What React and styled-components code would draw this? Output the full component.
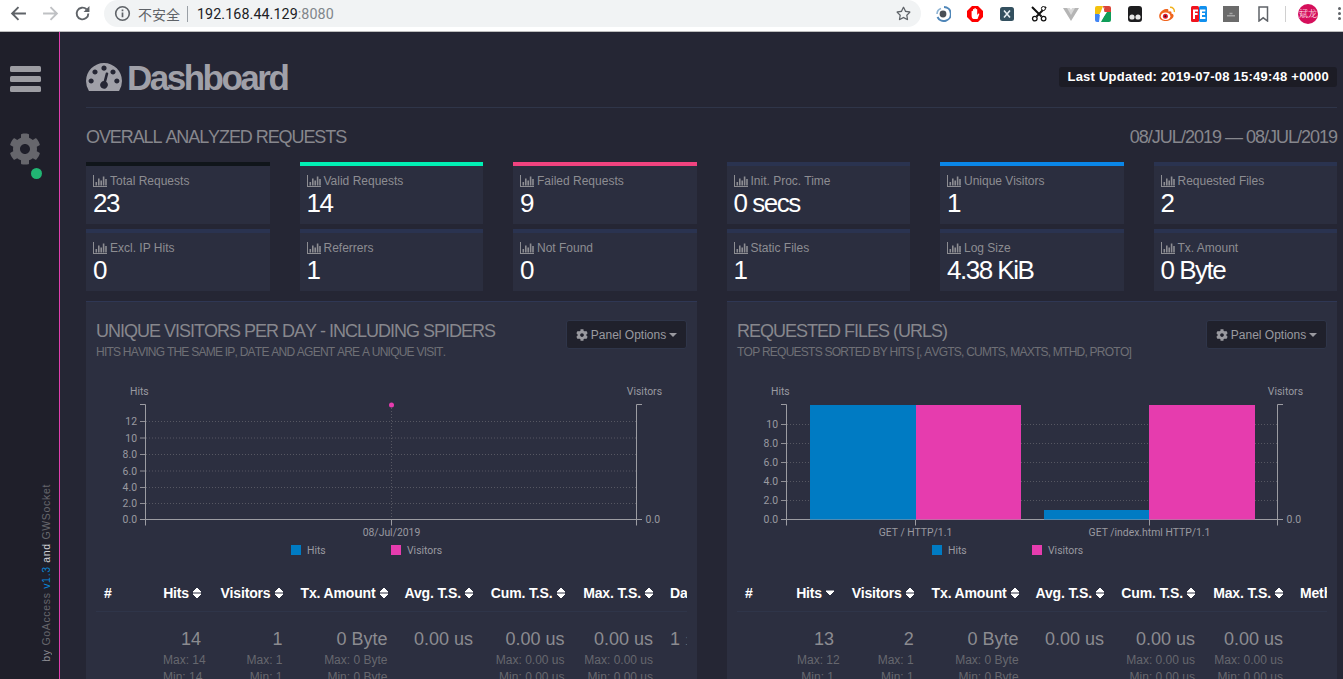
import React from "react";
import styled, { createGlobalStyle } from "styled-components";
import { FaCog, FaRegStar } from "react-icons/fa";

const Global = createGlobalStyle`
  html, body { margin: 0; padding: 0; height: 679px; overflow: hidden; background: #252634; }
  * { box-sizing: border-box; }
  body { font-family: "Liberation Sans", Arial, sans-serif; }
`;

const Page = styled.div`
  width: 1343px;
  height: 679px;
  display: flex;
  flex-direction: column;
  overflow: hidden;
`;

/* ---------- browser chrome ---------- */
const Chrome = styled.div`
  height: 32px;
  flex: none;
  background: #fff;
  border-bottom: 1px solid #bdbdbd;
  display: flex;
  align-items: flex-start;
`;
const NavGroup = styled.div`
  width: 104px;
  height: 27px;
  flex: none;
  display: flex;
  align-items: center;
  padding-left: 10px;
  gap: 15px;
`;
const NavIcon = styled.svg`
  width: 17px;
  height: 17px;
  flex: none;
  display: block;
`;
const Omnibox = styled.div`
  width: 817px;
  height: 27px;
  flex: none;
  background: #f1f3f4;
  border-radius: 0 14px 14px 14px;
  border-top-left-radius: 14px;
  display: flex;
  align-items: center;
  padding: 0 10px 0 10px;
`;
const Insecure = styled.span`
  font-family: "Noto Sans CJK SC", "Liberation Sans", sans-serif;
  font-size: 14px;
  color: #5f6368;
  margin-left: 7px;
  padding-right: 7px;
  line-height: 16px;
  border-right: 1px solid #9aa0a6;
`;
const Host = styled.span`
  font-family: "Roboto", "Liberation Sans", sans-serif;
  font-size: 14.3px;
  color: #202124;
  margin-left: 9px;
  letter-spacing: 0.08px;
`;
const Port = styled.span`
  color: #80868b;
`;
const StarSlot = styled.span`
  margin-left: auto;
  color: #5f6368;
  display: flex;
  font-size: 15px;
`;
const Extensions = styled.div`
  flex: 1;
  height: 27px;
  display: flex;
  align-items: center;
  padding-left: 14px;
  gap: 16px;
`;
const Ext = styled.svg`
  width: 16px;
  height: 16px;
  flex: none;
  display: block;
`;
const ToolDivider = styled.span`
  width: 1px;
  height: 16px;
  background: #d0d0d0;
  margin-left: -2px;
  flex: none;
`;
const Avatar = styled.span`
  width: 20px;
  height: 20px;
  flex: none;
  margin-left: -4px;
  border-radius: 50%;
  background: #d50f5b;
  color: #f6c6d8;
  font-family: "Noto Sans CJK SC", sans-serif;
  font-size: 9px;
  line-height: 20px;
  text-align: center;
  white-space: nowrap;
  overflow: hidden;
`;
const MoreDots = styled.span`
  display: flex;
  flex-direction: column;
  gap: 2px;
  margin-left: 4px;
  flex: none;
  & > i {
    width: 3px;
    height: 3px;
    background: #5f6368;
    border-radius: 50%;
    display: block;
  }
`;

/* ---------- app ---------- */
const Body = styled.div`
  flex: 1;
  display: flex;
  min-height: 0;
`;
const Sidebar = styled.aside`
  width: 60px;
  flex: none;
  background: #1f1f2a;
  border-right: 1px solid #e03fae;
  display: flex;
  flex-direction: column;
  align-items: center;
  padding-top: 34px;
  padding-bottom: 17px;
`;
const Burger = styled.div`
  width: 31px;
  display: flex;
  flex-direction: column;
  gap: 4px;
  margin-right: 9px;
  & > i {
    display: block;
    height: 6px;
    background: #9c9ca2;
    border-radius: 1.5px;
  }
`;
const GearWrap = styled.div`
  position: relative;
  margin-top: 41px;
  margin-right: 9px;
  width: 32px;
  height: 32px;
  color: #66666c;
  font-size: 32px;
  display: flex;
`;
const StatusDot = styled.span`
  position: absolute;
  right: -1px;
  bottom: -14px;
  width: 11px;
  height: 11px;
  border-radius: 50%;
  background: #21b573;
`;
const Credit = styled.div`
  margin-top: auto;
  writing-mode: vertical-rl;
  transform: rotate(180deg);
  font-size: 10.5px;
  letter-spacing: 0.67px;
  color: #8a8a90;
  align-self: flex-end;
  margin-right: 7px;
  white-space: nowrap;
`;
const CreditLink = styled.span`
  color: ${(p) => p.$c};
`;
const Main = styled.main`
  flex: 1;
  min-width: 0;
  padding: 0 6px 0 26px;
  background: #252634;
  overflow: hidden;
`;
const PageHead = styled.header`
  height: 76px;
  border-bottom: 1px solid #2f3549;
  display: flex;
  align-items: flex-start;
  justify-content: space-between;
`;
const H1 = styled.h1`
  margin: 28px 0 0;
  display: flex;
  align-items: flex-start;
  gap: 5px;
  font-size: 35px;
  line-height: 36px;
  font-weight: 700;
  letter-spacing: -2.5px;
  color: #a0a0a8;
`;
const Gauge = styled.svg`
  width: 36px;
  height: 28.3px;
  margin-top: 3px;
  display: block;
  fill: #a0a0a8;
  flex: none;
`;
const Updated = styled.div`
  margin: 35px 0 0 0;
  padding: 0 8px;
  height: 20px;
  line-height: 20px;
  border-radius: 3px;
  background: #1c1c25;
  color: #fff;
  font-size: 13px;
  font-weight: 700;
  letter-spacing: 0.23px;
  white-space: nowrap;
`;
const SectionHead = styled.div`
  height: 54px;
  display: flex;
  justify-content: space-between;
  align-items: flex-start;
  padding-top: 19px;
  font-size: 18px;
  line-height: 20px;
  letter-spacing: -1px;
  font-kerning: none;
  color: #87878d;
`;
const SectionTitle = styled.span`
  letter-spacing: -1.08px;
`;
const CardGrid = styled.div`
  display: grid;
  grid-template-columns: repeat(6, 1fr);
  column-gap: 30px;
  row-gap: 5px;
`;
const Card = styled.div`
  height: 62px;
  background: #2b2e3f;
  border-top: 4px solid ${(p) => p.$accent || "#2a3350"};
  padding: 8px 7px 0;
  overflow: hidden;
`;
const CardLabel = styled.div`
  display: flex;
  align-items: center;
  gap: 3px;
  font-size: 12px;
  line-height: 14px;
  color: #8d8d92;
  white-space: nowrap;
`;
const BarIcon = styled.svg`
  width: 14px;
  height: 12px;
  flex: none;
  display: block;
  fill: #8d8d92;
`;
const CardValue = styled.div`
  margin: 1px 0 0 0;
  font-size: 26px;
  line-height: 28px;
  letter-spacing: -1.5px;
  color: #fff;
  white-space: nowrap;
`;
const Panels = styled.div`
  margin-top: 10px;
  display: grid;
  grid-template-columns: 611px 610px;
  column-gap: 30px;
`;
const Panel = styled.section`
  background: #2c2f40;
  border-top: 1px solid #2f3754;
  height: 400px;
  padding: 0 10px;
  overflow: hidden;
`;
const PanelHead = styled.div`
  display: flex;
  justify-content: space-between;
  align-items: flex-start;
  padding-top: 19px;
  height: 78px;
`;
const PanelTitle = styled.h3`
  margin: 0;
  font-size: 18px;
  line-height: 20px;
  font-weight: 400;
  letter-spacing: -1px;
  font-kerning: none;
  color: #87878d;
`;
const PanelSub = styled.p`
  margin: 4px 0 0;
  font-size: 12px;
  line-height: 14px;
  letter-spacing: -0.76px;
  font-kerning: none;
  color: #6f7076;
  white-space: nowrap;
`;
const OptionsBtn = styled.button`
  margin-top: -1px;
  height: 29px;
  width: 121px;
  flex: none;
  padding: 0;
  display: flex;
  align-items: center;
  justify-content: center;
  gap: 3px;
  background: #20212c;
  border: 1px solid #2f3549;
  border-radius: 3px;
  color: #9a9aa0;
  font-family: inherit;
  font-size: 12px;
`;
const Caret = styled.span`
  width: 0;
  height: 0;
  border-left: 4.5px solid transparent;
  border-right: 4.5px solid transparent;
  border-top: 4.5px solid #9a9aa0;
`;
const ChartSvg = styled.svg`
  display: block;
  margin: 0 -10px;
  width: calc(100% + 20px);
  height: 193px;
  font-family: "Roboto", "Liberation Sans", sans-serif;
  font-size: 10.4px;
  fill: #9a9aa0;
`;
const TableWrap = styled.div`
  overflow: hidden;
`;
const Row = styled.div`
  display: grid;
  grid-template-columns: ${(p) => p.$cols};
`;
const HeadRow = styled(Row)`
  height: 39px;
  border-bottom: 1px solid #2f3549;
  align-items: start;
  padding-top: 12px;
`;
const Th = styled.div`
  padding: 0 8px;
  display: flex;
  align-items: center;
  justify-content: ${(p) => (p.$left ? "flex-start" : "flex-end")};
  gap: 3px;
  height: 15px;
  font-size: 14px;
  font-weight: 700;
  letter-spacing: -0.15px;
  color: #fff;
  white-space: nowrap;
  overflow: ${(p) => (p.$left ? "hidden" : "visible")};
`;
const SortIcon = styled.svg`
  width: 10px;
  height: 12px;
  flex: none;
  display: block;
  fill: #fff;
  stroke: #fff;
  stroke-width: 1;
  stroke-linejoin: round;
`;
const DataRow = styled(Row)`
  padding-top: 17px;
`;
const Td = styled.div`
  padding: 0 9px 0 8px;
  text-align: right;
  white-space: nowrap;
  overflow: hidden;
`;
const CellMain = styled.div`
  font-size: 18px;
  line-height: 20px;
  color: #8b8b90;
`;
const CellMeta = styled.div`
  margin-top: 5px;
  font-size: 12px;
  line-height: 12px;
  color: #66676e;
`;
const DateCell = styled.div`
  font-size: 18px;
  line-height: 20px;
  color: #8b8b90;
  text-align: left;
  & > small {
    font-size: 12px;
    color: #66676e;
  }
`;

/* ---------- icons ---------- */
const GAUGE =
  "M384 1152q0-53-37.5-90.5t-90.5-37.5-90.5 37.5-37.5 90.5 37.5 90.5 90.5 37.5 90.5-37.5 37.5-90.5zm192-448q0-53-37.5-90.5t-90.5-37.5-90.5 37.5-37.5 90.5 37.5 90.5 90.5 37.5 90.5-37.5 37.5-90.5zm428 481l101-382q6-26-7.5-48.5t-38.5-29.5-48 6.5-30 39.5l-101 382q-60 5-107 43.5t-63 98.5q-20 77 20 146t117 89 146-20 89-117q16-60-6-117t-72-91zm660-33q0-53-37.5-90.5t-90.5-37.5-90.5 37.5-37.5 90.5 37.5 90.5 90.5 37.5 90.5-37.5 37.5-90.5zm-640-640q0-53-37.5-90.5t-90.5-37.5-90.5 37.5-37.5 90.5 37.5 90.5 90.5 37.5 90.5-37.5 37.5-90.5zm448 192q0-53-37.5-90.5t-90.5-37.5-90.5 37.5-37.5 90.5 37.5 90.5 90.5 37.5 90.5-37.5 37.5-90.5zm320 448q0 261-141 483-19 29-54 29h-1402q-35 0-54-29-141-221-141-483 0-182 71-348t191-286 286-191 348-71 348 71 286 191 191 286 71 348z";

const Bars = () => (
  <BarIcon viewBox="0 0 14 12">
    <path d="M0 0h1v11h13v1H0z" />
    <path d="M2.5 7h1.6v3.4H2.5zM5 3.5h1.6v6.9H5zM7.4 5.5H9v4.9H7.4zM9.8 1.5h1.6v8.9H9.8zM12.2 4h1.6v6.4h-1.6z" />
  </BarIcon>
);

const Sort = ({ desc }) => (
  <SortIcon viewBox="0 0 10 12">
    {desc ? (
      <path d="M1 4h8L5 8z" />
    ) : (
      <>
        <path d="M5 1L9 5H1z" />
        <path d="M1 7h8l-4 4z" />
      </>
    )}
  </SortIcon>
);

function LeftChart() {
  const ticks = [["12", 421], ["10", 437.5], ["8.0", 454], ["6.0", 470.5], ["4.0", 487], ["2.0", 503]];
  return (
    <ChartSvg viewBox="86 380 611 193">
      {ticks.map(([l, y]) => (
        <g key={l}>
          <line x1="146" x2="636" y1={y + 0.5} y2={y + 0.5} stroke="#565762" strokeDasharray="1 2" />
          <line x1="140" x2="146" y1={y + 0.5} y2={y + 0.5} stroke="#8f8f95" />
          <text x="137" y={y + 4} textAnchor="end">{l}</text>
        </g>
      ))}
      <line x1="391.5" x2="391.5" y1="405" y2="519" stroke="#565762" strokeDasharray="1 2" />
      <path d="M140 404.5h5.5V525.5M140 519.5H637M391.5 519.5v6" fill="none" stroke="#9c9ca2" />
      <path d="M642 404.5h-5.5V525.5M636.5 519.5H642" fill="none" stroke="#9c9ca2" />
      <text x="137" y="519" dy="4" textAnchor="end">0.0</text>
      <text x="660" y="523" textAnchor="end">0.0</text>
      <text x="130" y="395">Hits</text>
      <text x="662" y="395" textAnchor="end">Visitors</text>
      <circle cx="391.5" cy="405" r="2.5" fill="#e63cae" />
      <text x="391.5" y="536" textAnchor="middle">08/Jul/2019</text>
      <rect x="291" y="545" width="10" height="10" fill="#007bc3" />
      <text x="307" y="554">Hits</text>
      <rect x="391" y="545" width="10" height="10" fill="#e63cae" />
      <text x="407" y="554">Visitors</text>
    </ChartSvg>
  );
}

function RightChart() {
  const ticks = [["10", 424], ["8.0", 443], ["6.0", 462], ["4.0", 481], ["2.0", 500]];
  return (
    <ChartSvg viewBox="727 380 610 193">
      {ticks.map(([l, y]) => (
        <g key={l}>
          <line x1="787" x2="1277" y1={y + 0.5} y2={y + 0.5} stroke="#565762" strokeDasharray="1 2" />
          <line x1="781" x2="787" y1={y + 0.5} y2={y + 0.5} stroke="#8f8f95" />
          <text x="778" y={y + 4} textAnchor="end">{l}</text>
        </g>
      ))}
      <path d="M781 404.5h5.5V525.5M781 519.5H1278M915.5 519.5v6M1149.5 519.5v6" fill="none" stroke="#9c9ca2" />
      <path d="M1283 404.5h-5.5V525.5M1277.5 519.5H1283" fill="none" stroke="#9c9ca2" />
      <rect x="810" y="405" width="106" height="114.5" fill="#007bc3" />
      <rect x="916" y="405" width="105" height="114.5" fill="#e63cae" />
      <rect x="1044" y="510" width="105" height="9.5" fill="#007bc3" />
      <rect x="1149" y="405" width="106" height="114.5" fill="#e63cae" />
      <text x="778" y="523" textAnchor="end">0.0</text>
      <text x="1301" y="523" textAnchor="end">0.0</text>
      <text x="771" y="395">Hits</text>
      <text x="1303" y="395" textAnchor="end">Visitors</text>
      <text x="915.5" y="536" textAnchor="middle">GET / HTTP/1.1</text>
      <text x="1149.5" y="536" textAnchor="middle">GET /index.html HTTP/1.1</text>
      <rect x="932" y="545" width="10" height="10" fill="#007bc3" />
      <text x="948" y="554">Hits</text>
      <rect x="1032" y="545" width="10" height="10" fill="#e63cae" />
      <text x="1048" y="554">Visitors</text>
    </ChartSvg>
  );
}

const TOP_CARDS = [
  ["Total Requests", "23", "#10151a"],
  ["Valid Requests", "14", "#00f0b4"],
  ["Failed Requests", "9", "#f0437f"],
  ["Init. Proc. Time", "0 secs"],
  ["Unique Visitors", "1", "#0a86e8"],
  ["Requested Files", "2"],
  ["Excl. IP Hits", "0"],
  ["Referrers", "1"],
  ["Not Found", "0"],
  ["Static Files", "1"],
  ["Log Size", "4.38 KiB"],
  ["Tx. Amount", "0 Byte"],
];

const HEADERS = ["Hits", "Visitors", "Tx. Amount", "Avg. T.S.", "Cum. T.S.", "Max. T.S."];

function DataTable({ cols, last, sortedHits, rows, lastCell }) {
  return (
    <TableWrap>
      <HeadRow $cols={cols}>
        <Th $left>#</Th>
        {HEADERS.map((h, i) => (
          <Th key={h}>
            {h}
            <Sort desc={i === 0 && sortedHits} />
          </Th>
        ))}
        <Th $left>{last}</Th>
      </HeadRow>
      <DataRow $cols={cols}>
        <Td />
        {rows.map((r, i) => (
          <Td key={i}>
            <CellMain>{r[0]}</CellMain>
            {r[1] && <CellMeta>Max: {r[1]}</CellMeta>}
            {r[2] && <CellMeta>Min: {r[2]}</CellMeta>}
          </Td>
        ))}
        <Td>{lastCell}</Td>
      </DataRow>
    </TableWrap>
  );
}

const ROWS_LEFT = [
  ["14", "14", "14"],
  ["1", "1", "1"],
  ["0 Byte", "0 Byte", "0 Byte"],
  ["0.00 us"],
  ["0.00 us", "0.00 us", "0.00 us"],
  ["0.00 us", "0.00 us", "0.00 us"],
];
const ROWS_RIGHT = [
  ["13", "12", "1"],
  ["2", "1", "1"],
  ["0 Byte", "0 Byte", "0 Byte"],
  ["0.00 us"],
  ["0.00 us", "0.00 us", "0.00 us"],
  ["0.00 us", "0.00 us", "0.00 us"],
];

function ExtensionIcons() {
  return (
    <>
      <Ext viewBox="0 0 16 16">
        <path d="M9 1a7 7 0 1 1-6.5 10" fill="none" stroke="#4f86b8" strokeWidth="2" />
        <path d="M2 8a6 6 0 0 1 4-5.5" fill="none" stroke="#8fb4d4" strokeWidth="1.6" />
        <circle cx="8" cy="8" r="3.4" fill="#4a4f55" />
      </Ext>
      <Ext viewBox="0 0 16 16">
        <path d="M5 0h6l5 5v6l-5 5H5l-5-5V5z" fill="#f00" />
        <path d="M4.6 8V5.4a.7.7 0 0 1 1.4 0V3.6a.7.7 0 0 1 1.4 0V2.8a.7.7 0 0 1 1.4 0v.8a.7.7 0 0 1 1.4 0V9l1-1.2c.6-.6 1.4 0 1 .7L10.5 13H6.5C5 12.5 4.6 11 4.6 9.5z" fill="#fff" />
      </Ext>
      <Ext viewBox="0 0 16 16">
        <rect x="1" y="1" width="14" height="14" rx="2.5" fill="#33505f" />
        <path d="M5 4.5l6 7M11 4.5l-6 7" stroke="#e6eef2" strokeWidth="1.6" />
      </Ext>
      <Ext viewBox="0 0 16 16">
        <path d="M1 1l9.5 9.5M15 1L5.5 10.5" stroke="#111" strokeWidth="2" />
        <circle cx="3.8" cy="12.6" r="2.3" fill="none" stroke="#111" strokeWidth="1.3" />
        <circle cx="12.6" cy="12.6" r="2.3" fill="none" stroke="#111" strokeWidth="1.3" />
        <circle cx="12.4" cy="2.5" r="2" fill="#fff" stroke="#111" strokeWidth="1" />
      </Ext>
      <Ext viewBox="0 0 16 16">
        <path d="M0 2h5.5L8 6l2.5-4H16L8 15z" fill="#b5b5b5" />
        <path d="M4 2h3l1 2 1-2h3L8 9z" fill="#d8d8d8" />
      </Ext>
      <Ext viewBox="0 0 16 16">
        <path d="M2 0h6L5 8H0V2a2 2 0 0 1 2-2z" fill="#f4c20d" />
        <path d="M8 0h6a2 2 0 0 1 2 2v4H9.5z" fill="#db4437" />
        <path d="M0 8h5l-1 8H2a2 2 0 0 1-2-2z" fill="#4285f4" />
        <path d="M11 6h5v8a2 2 0 0 1-2 2H6z" fill="#0f9d58" />
        <path d="M9.5 1L4 9h3.5L6 15l6-9H8.5z" fill="#fff" />
      </Ext>
      <Ext viewBox="0 0 16 16">
        <rect x="1" y="0" width="14" height="16" rx="3" fill="#1d1d1f" />
        <circle cx="5" cy="11" r="2.6" fill="#e8e8e8" />
        <circle cx="11" cy="11" r="2.6" fill="#e8e8e8" />
      </Ext>
      <Ext viewBox="0 0 16 16">
        <path d="M7 3C3 3.5 0 7 .2 10.5 .6 14.5 5 15.5 8 15c3.4-.5 6.6-2.6 6.6-5.4 0-1.6-1.6-2-2.2-2.2.4-1.4-.4-2.4-2.2-2 -.8.4-1 .2-.8-1C9.6 3 8.4 2.8 7 3z" fill="#f0651d" />
        <ellipse cx="6.6" cy="10.2" rx="4.8" ry="3.8" fill="#fff" />
        <circle cx="6.4" cy="10.2" r="2.5" fill="#e6162d" />
        <circle cx="6.4" cy="10.2" r="1" fill="#222" />
        <path d="M11 1.2c2.6-.2 4.8 1.8 4.2 4.8" fill="none" stroke="#f0b21d" strokeWidth="1.4" />
      </Ext>
      <Ext viewBox="0 0 16 16">
        <rect width="8" height="16" rx="1.5" fill="#f0141e" />
        <rect x="8" width="8" height="16" rx="1.5" fill="#1190ee" />
        <path d="M2 3.5h5v2H4v1.6h2.6v2H4V13H2zM9 3.5h5.4v2H11v1.6h3v2h-3V11h3.4v2H9z" fill="#fff" />
      </Ext>
      <Ext viewBox="0 0 16 16">
        <rect width="16" height="16" fill="#6b6b6b" />
        <path d="M4 9h8v1.6H4zM6.5 6.8h3v1.4h-3z" fill="#a5a5a5" />
      </Ext>
      <Ext viewBox="0 0 16 16">
        <path d="M4 1h8.5v14L8.2 11.8 4 15z" fill="none" stroke="#5f6368" strokeWidth="1.5" />
      </Ext>
    </>
  );
}

export default function App() {
  return (
    <Page>
      <Global />
      <Chrome>
        <NavGroup>
          <NavIcon viewBox="0 0 16 16">
            <path d="M15 8H2M8 2L2 8l6 6" fill="none" stroke="#5f6368" strokeWidth="1.8" />
          </NavIcon>
          <NavIcon viewBox="0 0 16 16">
            <path d="M1 8h13M8 2l6 6-6 6" fill="none" stroke="#bfc1c4" strokeWidth="1.8" />
          </NavIcon>
          <NavIcon viewBox="0 0 16 16">
            <path d="M13.5 8a5.5 5.5 0 1 1-1.7-4" fill="none" stroke="#5f6368" strokeWidth="1.8" />
            <path d="M14.5 1v5.5H9z" fill="#5f6368" />
          </NavIcon>
        </NavGroup>
        <Omnibox>
          <NavIcon viewBox="0 0 16 16">
            <circle cx="8" cy="8" r="6.4" fill="none" stroke="#5f6368" strokeWidth="1.5" />
            <path d="M7.2 7h1.6v4.6H7.2zM7.2 4.2h1.6v1.6H7.2z" fill="#5f6368" />
          </NavIcon>
          <Insecure>不安全</Insecure>
          <Host>
            192.168.44.129<Port>:8080</Port>
          </Host>
          <StarSlot>
            <FaRegStar />
          </StarSlot>
        </Omnibox>
        <Extensions>
          <ExtensionIcons />
          <ToolDivider />
          <Avatar>斌龙</Avatar>
          <MoreDots>
            <i />
            <i />
            <i />
          </MoreDots>
        </Extensions>
      </Chrome>
      <Body>
        <Sidebar>
          <Burger>
            <i />
            <i />
            <i />
          </Burger>
          <GearWrap>
            <FaCog />
            <StatusDot />
          </GearWrap>
          <Credit>
            by <CreditLink $c="#66666c">GoAccess</CreditLink>{" "}
            <CreditLink $c="#0a86d8">v1.3</CreditLink>{" "}
            <CreditLink $c="#cfcfd4">and</CreditLink>{" "}
            <CreditLink $c="#66666c">GWSocket</CreditLink>
          </Credit>
        </Sidebar>
        <Main>
          <PageHead>
            <H1>
              <Gauge viewBox="0 256 1792 1408">
                <path d={GAUGE} />
              </Gauge>
              Dashboard
            </H1>
            <Updated>Last Updated: 2019-07-08 15:49:48 +0000</Updated>
          </PageHead>
          <SectionHead>
            <SectionTitle>OVERALL ANALYZED REQUESTS</SectionTitle>
            <span>08/JUL/2019 — 08/JUL/2019</span>
          </SectionHead>
          <CardGrid>
            {TOP_CARDS.map(([label, value, accent]) => (
              <Card key={label} $accent={accent}>
                <CardLabel>
                  <Bars />
                  {label}
                </CardLabel>
                <CardValue>{value}</CardValue>
              </Card>
            ))}
          </CardGrid>
          <Panels>
            <Panel>
              <PanelHead>
                <div>
                  <PanelTitle>UNIQUE VISITORS PER DAY - INCLUDING SPIDERS</PanelTitle>
                  <PanelSub>HITS HAVING THE SAME IP, DATE AND AGENT ARE A UNIQUE VISIT.</PanelSub>
                </div>
                <OptionsBtn>
                  <FaCog />
                  Panel Options
                  <Caret />
                </OptionsBtn>
              </PanelHead>
              <LeftChart />
              <DataTable
                cols="59px 55px 81.5px 105px 85.5px 91.5px 88.5px 1fr"
                last="Data"
                rows={ROWS_LEFT}
                lastCell={
                  <DateCell>
                    1 <small>1</small>
                  </DateCell>
                }
              />
            </Panel>
            <Panel>
              <PanelHead>
                <div>
                  <PanelTitle>REQUESTED FILES (URLS)</PanelTitle>
                  <PanelSub>TOP REQUESTS SORTED BY HITS [, AVGTS, CUMTS, MAXTS, MTHD, PROTO]</PanelSub>
                </div>
                <OptionsBtn>
                  <FaCog />
                  Panel Options
                  <Caret />
                </OptionsBtn>
              </PanelHead>
              <RightChart />
              <DataTable
                cols="52px 54px 79.7px 104.9px 85.4px 91px 88px 1fr"
                last="Method"
                sortedHits
                rows={ROWS_RIGHT}
              />
            </Panel>
          </Panels>
        </Main>
      </Body>
    </Page>
  );
}
